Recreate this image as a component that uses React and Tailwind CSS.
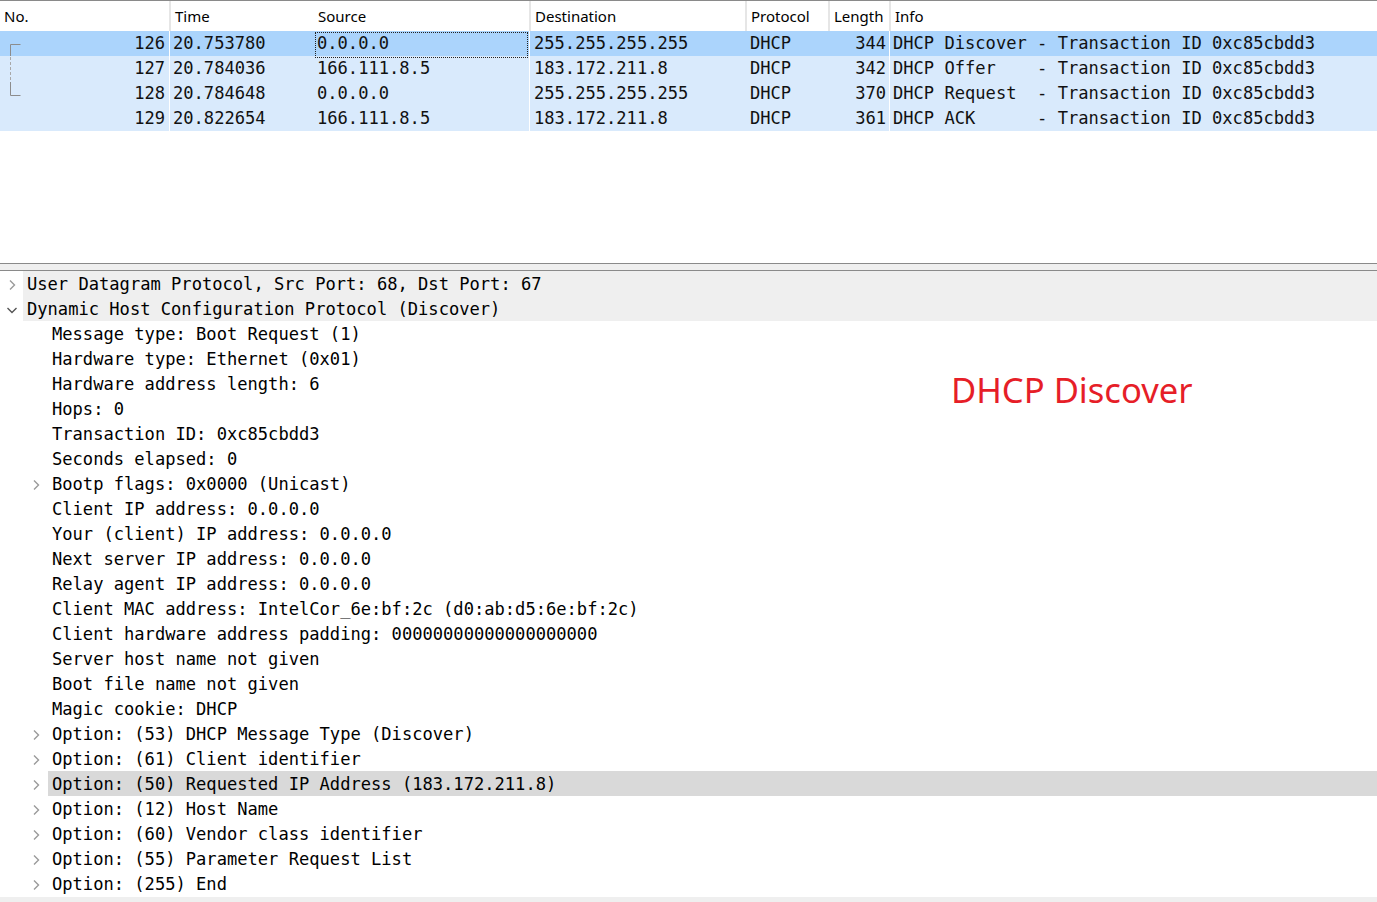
import React from "react";

const MONO = { fontFamily: '"DejaVu Sans Mono", "Liberation Mono", monospace' };
const SANS = { fontFamily: '"Noto Sans", "Open Sans", sans-serif' };

const rows = [
  { no: "126", time: "20.753780", src: "0.0.0.0", dst: "255.255.255.255", proto: "DHCP", len: "344", info: "DHCP Discover - Transaction ID 0xc85cbdd3", sel: true },
  { no: "127", time: "20.784036", src: "166.111.8.5", dst: "183.172.211.8", proto: "DHCP", len: "342", info: "DHCP Offer    - Transaction ID 0xc85cbdd3" },
  { no: "128", time: "20.784648", src: "0.0.0.0", dst: "255.255.255.255", proto: "DHCP", len: "370", info: "DHCP Request  - Transaction ID 0xc85cbdd3" },
  { no: "129", time: "20.822654", src: "166.111.8.5", dst: "183.172.211.8", proto: "DHCP", len: "361", info: "DHCP ACK      - Transaction ID 0xc85cbdd3" },
];

const details = [
  { t: "User Datagram Protocol, Src Port: 68, Dst Port: 67", lvl: 0, ch: "right" },
  { t: "Dynamic Host Configuration Protocol (Discover)", lvl: 0, ch: "down" },
  { t: "Message type: Boot Request (1)", lvl: 1 },
  { t: "Hardware type: Ethernet (0x01)", lvl: 1 },
  { t: "Hardware address length: 6", lvl: 1 },
  { t: "Hops: 0", lvl: 1 },
  { t: "Transaction ID: 0xc85cbdd3", lvl: 1 },
  { t: "Seconds elapsed: 0", lvl: 1 },
  { t: "Bootp flags: 0x0000 (Unicast)", lvl: 1, ch: "right" },
  { t: "Client IP address: 0.0.0.0", lvl: 1 },
  { t: "Your (client) IP address: 0.0.0.0", lvl: 1 },
  { t: "Next server IP address: 0.0.0.0", lvl: 1 },
  { t: "Relay agent IP address: 0.0.0.0", lvl: 1 },
  { t: "Client MAC address: IntelCor_6e:bf:2c (d0:ab:d5:6e:bf:2c)", lvl: 1 },
  { t: "Client hardware address padding: 00000000000000000000", lvl: 1 },
  { t: "Server host name not given", lvl: 1 },
  { t: "Boot file name not given", lvl: 1 },
  { t: "Magic cookie: DHCP", lvl: 1 },
  { t: "Option: (53) DHCP Message Type (Discover)", lvl: 1, ch: "right" },
  { t: "Option: (61) Client identifier", lvl: 1, ch: "right" },
  { t: "Option: (50) Requested IP Address (183.172.211.8)", lvl: 1, ch: "right", hl: true },
  { t: "Option: (12) Host Name", lvl: 1, ch: "right" },
  { t: "Option: (60) Vendor class identifier", lvl: 1, ch: "right" },
  { t: "Option: (55) Parameter Request List", lvl: 1, ch: "right" },
  { t: "Option: (255) End", lvl: 1, ch: "right" },
];

function Chevron({ dir }) {
  if (dir === "down") {
    return (
      <svg width="12" height="12" viewBox="0 0 12 12">
        <polyline points="1.5,4 6,8.5 10.5,4" fill="none" stroke="#555" strokeWidth="1.4" />
      </svg>
    );
  }
  return (
    <svg width="12" height="12" viewBox="0 0 12 12">
      <polyline points="4,1.5 8.5,6 4,10.5" fill="none" stroke="#9a9a9a" strokeWidth="1.4" />
    </svg>
  );
}

export default function App() {
  return (
    <div className="relative w-[1377px] h-[902px] bg-white overflow-hidden text-[#111]">
      {/* Packet list pane */}
      <div className="relative h-[263px] border-t border-[#8a8a8a]">
        <div className="grid grid-cols-[169px_144px_216px_216px_83px_61px_1fr] h-[30px] items-center text-[15px] text-black" style={SANS}>
          <div className="pl-[4px] h-full flex items-center">No.</div>
          <div className="pl-[4px] h-full flex items-center border-l-2 border-[#e6e6e6]">Time</div>
          <div className="pl-[5px] h-full flex items-center">Source</div>
          <div className="pl-[4px] h-full flex items-center border-l-2 border-[#e6e6e6]">Destination</div>
          <div className="pl-[4px] h-full flex items-center border-l-2 border-[#e6e6e6]">Protocol</div>
          <div className="pl-[4px] h-full flex items-center border-l-2 border-[#e6e6e6]">Length</div>
          <div className="pl-[4px] h-full flex items-center border-l-2 border-[#e6e6e6]">Info</div>
        </div>
        <div className="text-[17.1px] whitespace-pre" style={MONO}>
          {rows.map((r) => (
            <div
              key={r.no}
              className={`grid grid-cols-[169px_144px_216px_216px_83px_61px_1fr] h-[25px] items-center ${r.sel ? "bg-[#abd4fc]" : "bg-[#d9eafc]"}`}
            >
              <div className="text-right pr-[4px] pb-[1px]">{r.no}</div>
              <div className="pl-[3px] pb-[1px] h-full flex items-center border-l border-white">{r.time}</div>
              <div className="relative pl-[4px] pb-[1px] h-full flex items-center">
                {r.sel && <span className="absolute left-[2px] right-[1px] top-[1px] bottom-0 border border-dotted border-[#222]" />}
                {r.src}
              </div>
              <div className="pl-[4px] pb-[1px] h-full flex items-center border-l border-white">{r.dst}</div>
              <div className="pl-[5px] pb-[1px]">{r.proto}</div>
              <div className="text-right pr-[3px] pb-[1px]">{r.len}</div>
              <div className="pl-[3px] pb-[1px] h-full flex items-center border-l border-white">{r.info}</div>
            </div>
          ))}
        </div>
        {/* conversation bracket */}
        <svg className="absolute left-0 top-0" width="30" height="110" viewBox="0 0 30 110">
          <path d="M20.5 43.5 H10.5 V55" fill="none" stroke="#8c8c8c" strokeWidth="1" />
          <path d="M10.5 56 V81" fill="none" stroke="#a8a8a8" strokeWidth="1" strokeDasharray="3 2" />
          <path d="M10.5 81 V94.5 H20.5" fill="none" stroke="#8c8c8c" strokeWidth="1" />
        </svg>
      </div>

      {/* splitter */}
      <div className="h-[8px] bg-[#efefef] border-y border-[#8a8a8a]" />

      {/* Packet details pane */}
      <div className="text-[17.1px] whitespace-pre text-black" style={MONO}>
        {details.map((d, i) => (
          <div key={i} className="relative h-[25px] flex items-center">
            {d.lvl === 0 ? (
              <>
                <div className="w-[23px] h-full flex items-center justify-center pl-[1px] pt-[2px]">
                  <Chevron dir={d.ch} />
                </div>
                <div className="flex-1 h-full flex items-center bg-[#efefef] pl-[4px] pt-[3px]">{d.t}</div>
              </>
            ) : (
              <>
                <div className="w-[48px] h-full flex items-center pl-[30px] pt-[2px]">
                  {d.ch ? <Chevron dir={d.ch} /> : null}
                </div>
                <div className={`flex-1 h-full flex items-center pl-[4px] pt-[3px] ${d.hl ? "bg-[#d9d9d9]" : ""}`}>{d.t}</div>
              </>
            )}
          </div>
        ))}
      </div>
      <div className="mt-[1px] h-[5px] bg-[#efefef]" />

      {/* annotation */}
      <div className="absolute left-[951px] top-[373px] text-[34.6px] leading-none text-[#e61e28]" style={SANS}>
        DHCP Discover
      </div>
    </div>
  );
}
